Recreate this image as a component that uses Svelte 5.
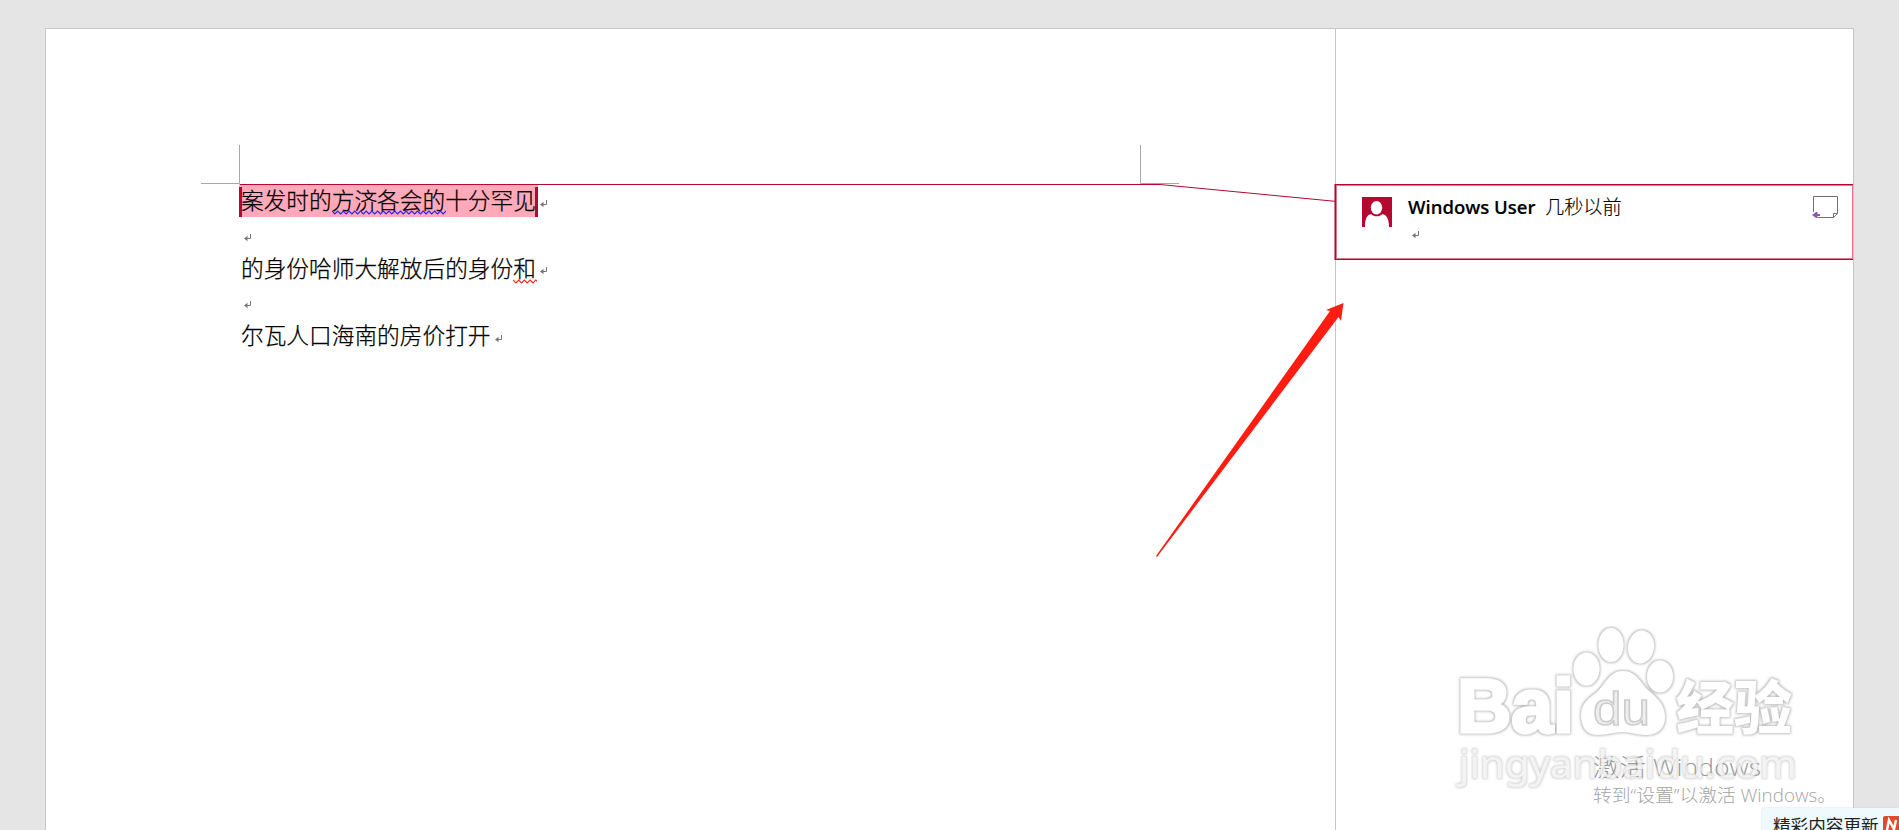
<script>
  const lines = [
    { kind: 'marked', parts: [{ t: '案发时的' }, { t: '方济各会的', wave: 'blue' }, { t: '十分罕见' }] },
    { kind: 'empty', parts: [] },
    { kind: 'plain', parts: [{ t: '的身份哈师大解放后的身份' }, { t: '和', wave: 'red' }] },
    { kind: 'empty', parts: [] },
    { kind: 'plain', parts: [{ t: '尔瓦人口海南的房价打开' }] }
  ];
  function wave(n) {
    let d = 'M0 1';
    for (let i = 0; i < n; i++) d += ` l2.85 3 l2.85 -3`;
    return d;
  }
</script>

{#snippet ret()}
  <svg class="ret" width="8" height="8" viewBox="0 0 8 8"><path d="M6.5 0V4.5H2" fill="none" stroke="#777" /><path d="M0 4.5L3.5 1.8V7.2Z" fill="#777" /></svg>
{/snippet}

<div class="workspace">
  <main class="page">
    <section class="body">
      <div class="text">
        {#each lines as line}
          <p class={line.kind}>
            <span class="run">{#each line.parts as part}<span class="part">{part.t}{#if part.wave}<svg class="wave" width={part.wave === 'blue' ? 114 : 24} height="5"><path d={wave(part.wave === 'blue' ? 20 : 5)} fill="none" stroke={part.wave === 'blue' ? '#2a20f0' : '#f22'} stroke-width="1.1" /></svg>{/if}</span>{/each}</span>
            {@render ret()}
          </p>
        {/each}
      </div>
    </section>
    <aside class="markup">
      <article class="comment">
        <svg class="avatar" width="30" height="30" viewBox="0 0 30 30"><rect width="30" height="30" fill="#b5072f" /><ellipse cx="14.5" cy="10.7" rx="5.7" ry="6.7" fill="#fff" /><path d="M3 30C3 22 5 17.3 9.3 17.3C12 20 17.5 20 20 17.3C24.5 17.3 27 22 27 30Z" fill="#fff" /></svg>
        <div class="content">
          <div class="head"><strong>Windows User</strong><span>几秒以前</span></div>
          {@render ret()}
        </div>
        <svg class="reply" width="27" height="24" viewBox="0 0 27 24"><path d="M1.5 16V.5H25.5V17.5L21.5 21.5H6" fill="none" stroke="#707070" /><path d="M21.5 21.5V17.5H25.5" fill="none" stroke="#707070" /><path d="M0 19L4 16H5.5V18H8V20H5.5V22H4Z" fill="#8b59ad" /></svg>
      </article>
    </aside>
  </main>

  <svg class="overlay" width="1899" height="830" viewBox="0 0 1899 830">
    <path d="M239.5 145V183.5H201M1140.5 145V183.5H1179" fill="none" stroke="#a8a8a8" />
    <path d="M240 184.5H1160L1335 201.3" fill="none" stroke="#b5072f" />
    <path d="M1156 556L1330 311L1326 310L1343.5 303L1341 321L1338.5 317L1157 557Z" fill="#ff1d12" />
    <g class="notice">
      <text x="1593" y="776" font-size="24" textLength="168" lengthAdjust="spacingAndGlyphs" fill="#999">激活 Windows</text>
      <text x="1593" y="802" font-size="18" textLength="243" lengthAdjust="spacingAndGlyphs" fill="#a4a4a4">转到“设置”以激活 Windows。</text>
    </g>
    <defs>
      <filter id="edge" x="-5%" y="-10%" width="110%" height="120%">
        <feMorphology in="SourceAlpha" operator="dilate" radius="0.8" result="wide" />
        <feGaussianBlur in="wide" stdDeviation="1.2" result="soft" />
        <feFlood flood-color="#aaa" flood-opacity="0.75" />
        <feComposite in2="soft" operator="in" result="halo" />
        <feMerge><feMergeNode in="halo" /><feMergeNode in="SourceGraphic" /></feMerge>
      </filter>
    </defs>
    <g filter="url(#edge)" fill="#fff">
      <text class="logo" x="1457" y="731.5" font-size="76" textLength="117" lengthAdjust="spacingAndGlyphs">Bai</text>
      <ellipse cx="1586.5" cy="669" rx="13" ry="16.5" />
      <ellipse cx="1611" cy="645" rx="12.5" ry="17" />
      <ellipse cx="1641" cy="647" rx="13" ry="16.5" transform="rotate(9 1641 647)" />
      <ellipse cx="1660" cy="676.5" rx="13" ry="16" />
      <path d="M1623 671C1637 671 1641 684 1649 691C1658 698 1665 706 1665 717C1665 729 1657 735 1646 735C1636 735 1632 732 1623 732C1613 732 1608 735 1597 735C1586 735 1581 726 1581 715C1581 704 1588 699 1597 692C1606 684 1609 671 1623 671Z" />
      <text class="cjk-logo" x="1676" y="729" font-size="58" textLength="116" lengthAdjust="spacingAndGlyphs">经验</text>
    </g>
    <text class="du" x="1593" y="724.5" font-size="47" textLength="57" lengthAdjust="spacingAndGlyphs">du</text>
    <text class="site" filter="url(#edge)" x="1459" y="778" font-size="38" textLength="338" lengthAdjust="spacingAndGlyphs">jingyanbaidu.com</text>
  </svg>

  <div class="toast">
    <span>精彩内容更新</span>
    <svg width="18" height="18" viewBox="0 0 18 18"><rect width="18" height="18" rx="2" fill="#e4482b" /><path d="M4 14L6 4L11 13L13 4" fill="none" stroke="#fff" stroke-width="2.5" /></svg>
  </div>
</div>

<style>
  :global(body) { margin: 0; overflow: hidden; }
  .workspace { position: relative; box-sizing: border-box; width: 1899px; height: 830px; padding: 28px 45px 0; overflow: hidden; background: #e5e5e5; font-family: "Noto Sans CJK SC", sans-serif; color: #000; }
  .page { display: flex; box-sizing: border-box; width: 1809px; height: 810px; border: 1px solid #c6c6c6; background: #fff; }
  .body { box-sizing: border-box; width: 1289px; padding: 155px 0 0 193px; }
  .text { font-size: 22.7px; font-weight: 300; -webkit-text-stroke: .25px #000; }
  p { display: flex; align-items: center; height: 33.7px; margin: 0; line-height: 31px; white-space: nowrap; }
  .run { padding-left: 2px; }
  .plain .run { padding-bottom: 2px; }
  .plain .wave { bottom: 0; }
  .marked .run { height: 33px; box-sizing: border-box; width: 299px; background: linear-gradient(#b5072f, #b5072f) left 3px / 3px 30px no-repeat, linear-gradient(#b5072f, #b5072f) right 3px / 3px 30px no-repeat, #ffa9bb; }
  .part { position: relative; }
  .wave { position: absolute; left: 0; bottom: 1px; }
  .ret { flex: none; margin: 6px 0 0 4px; }
  .marked .ret { margin-left: 2px; }
  .empty .ret { margin-left: 3px; }
  .markup { box-sizing: border-box; flex: 1; padding-top: 155px; border-left: 1px solid #c6c6c6; }
  .comment { display: flex; box-sizing: border-box; height: 76px; margin-left: -1px; padding: 12px 14px 0 26px; border: 1px solid #b5072f; border-right: 0; box-shadow: -1px 0 #db7790, inset 0 0 0 1px #db7790; }
  .content { flex: 1; margin-left: 16px; }
  .head { display: flex; align-items: center; gap: 10px; height: 18px; font-size: 19.2px; font-weight: 300; white-space: nowrap; -webkit-text-stroke: .15px #000; }
  .head strong { width: 127px; font: 600 18.5px "Open Sans", sans-serif; }
  .content .ret { display: block; margin: 16px 0 0 4px; }
  .reply { margin-top: -1px; }
  .overlay { position: absolute; inset: 0; pointer-events: none; }
  .notice { font-family: "Open Sans", "Noto Sans CJK SC", sans-serif; font-weight: 300; }
  .logo { font-family: "Liberation Sans", sans-serif; font-weight: 700; stroke: #fff; stroke-width: 3px; }
  .cjk-logo { font-family: "Noto Sans CJK SC", sans-serif; font-weight: 900; }
  .du { font-family: "Liberation Sans", sans-serif; font-weight: 400; fill: #eee; stroke: #ccc; stroke-width: 1.5px; }
  .site { font-family: "Noto Sans", sans-serif; font-weight: 400; fill: #fff; fill-opacity: .65; }
  .toast { position: absolute; left: 1762px; top: 808px; display: flex; box-sizing: border-box; gap: 4px; width: 137px; height: 30px; padding: 8px 0 0 11px; background: #effaff; border-top-left-radius: 3px; color: #222; font-size: 17.6px; line-height: 18px; white-space: nowrap; box-shadow: 0 0 2px #ccd; }
  .toast svg { flex: none; }
</style>
